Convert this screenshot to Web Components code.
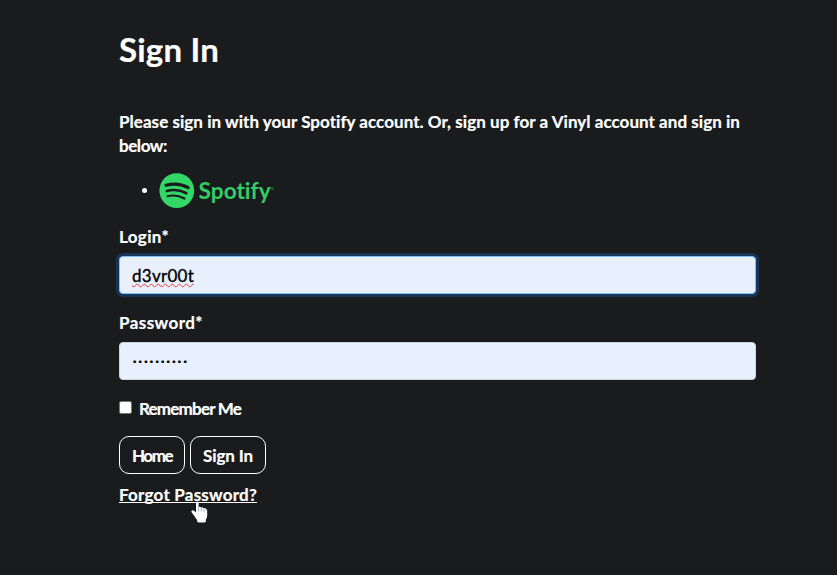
<!DOCTYPE html>
<html lang="en">
<head>
<meta charset="utf-8">
<title>Sign In</title>
<style>
html,body{margin:0;height:100%;background:#191b1c;overflow:hidden}
body{color:#fff;font:700 17px/24px Lato,"Liberation Sans",sans-serif;-webkit-text-stroke:.2px currentColor;font-variant-ligatures:none}
</style>
</head>
<body>
<sign-in-page></sign-in-page>
<script>
const define = (name, html, setup) => customElements.define(name, class extends HTMLElement {
  connectedCallback() {
    if (this.shadowRoot) return;
    const t = document.createElement('template');
    t.innerHTML = html;
    this.attachShadow({mode: 'open'}).append(t.content.cloneNode(true));
    if (setup) setup(this, this.shadowRoot);
  }
});

// A run of text whose tracking is adjusted to fill the width given in `w`.
define('fit-text', `<style>:host{display:inline-block;white-space:pre;width:max-content}span{display:inline-block;transform:translateY(var(--shift,1px));text-decoration:var(--line,none);text-underline-offset:var(--offset,auto);text-decoration-skip-ink:none}</style><span><slot></slot></span>`, (el, root) => {
  const w = parseFloat(el.getAttribute('w'));
  const span = root.querySelector('span');
  const n = el.textContent.length;
  const natural = span.getBoundingClientRect().width;
  el.style.letterSpacing = (w - natural) / n + 'px';
  el.style.width = w + 'px';
});

define('spotify-logo', `<style>:host{display:block;width:116px;height:36px}svg{display:block}</style>
<svg width="116" height="36" viewBox="0 0 116 36">
<circle cx="17.8" cy="17.6" r="17.4" fill="#32d768"/>
<g fill="none" stroke="#191b1c" stroke-linecap="round">
<path d="M7 12.3Q18.5 9 29.2 14.6" stroke-width="3.2"/>
<path d="M7.8 18Q18 15.2 27.3 20.2" stroke-width="2.7"/>
<path d="M8.6 23.2Q17.5 21 25.4 25.5" stroke-width="2.2"/></g>
<text x="39.6" y="25.5" textLength="72" lengthAdjust="spacingAndGlyphs" fill="#32cd65" font-family="Lato" font-weight="700" font-size="23.5">Spotify</text>
<circle cx="113.2" cy="15.4" r="1" fill="none" stroke="#248c49" stroke-width=".8"/>
</svg>`);

define('text-field', `<style>
:host{display:block}
.label{display:block;height:24px;margin-bottom:8px}
.box{box-sizing:border-box;height:38px;padding:6px 12px;border:1px solid #ced4da;border-radius:4px;background:#e8f0fe;color:#000;font-weight:400;display:flex;align-items:center}
:host([focused]) .box{border-color:#80bdff;box-shadow:0 0 0 3px #173557}
</style><span class="label"><slot name="label"></slot></span><div class="box"><slot></slot></div>`);

define('outline-button', `<style>
:host{display:block}
button{box-sizing:border-box;display:block;height:38px;padding:0 12px;border:1px solid #fff;border-radius:10px;background:none;color:inherit;font:inherit}
</style><button type="button"><slot></slot></button>`);

define('check-option', `<style>
:host{display:flex;align-items:center;gap:7px;height:24px}
i{box-sizing:border-box;width:13px;height:13px;border:1px solid #767676;border-radius:2px;background:#fff;margin-top:-2px}
</style><i></i><slot></slot>`);

define('hand-pointer', `<style>:host{display:block;width:18px;height:22px}svg{display:block}</style>
<svg width="18" height="22" viewBox="0 0 18 22"><path fill="#fff" d="M5 1.7Q5 .4 6.3.4T7.6 1.7V6.2Q8.8 5.2 10 6.6 11.3 5.7 12.5 7.3 14 6.6 15.2 8.2 16.2 8.2 16.2 9.8V14.5Q16.2 16.5 14.8 18.6V21Q10.5 22.2 6.2 21V19Q4.5 17.5 3.6 15.3L.6 11.2Q0 9.6 1.4 9.2 2.8 9 5 11.6Z"/><path d="M7.6 6.3V10.5M10.3 7V10.5M13 7.8V10.8" stroke="#777" stroke-width=".6" fill="none"/></svg>`);

define('sign-in-page', `<style>
:host{display:block;padding:30px 81px 0 119px}
h1{margin:0;height:39px;font-size:33px;line-height:39px;font-weight:700;--shift:0px}
hr{border:0;border-top:1px solid #1d1a25;margin:23px 0 16px}
p,ul{margin:0}
p{height:48px;margin-bottom:16px}
p fit-text{vertical-align:top}
ul{list-style:none;padding:0 0 0 23px;display:flex;align-items:center;gap:12px;height:36px}
.dot{width:5px;height:5px;border-radius:50%;background:#fff;margin-top:-1px}
.login{margin-top:15px}
.password{margin-top:16px}
check-option{margin-top:16px}
.actions{display:flex;gap:5px;margin-top:16px}
.forgot{display:block;width:max-content;margin-top:8px;color:inherit;position:relative;text-decoration:none}
.forgot fit-text{display:block;--line:underline 1px;--offset:1px}
hand-pointer{position:absolute;left:72px;top:19px}
.user{height:24px;-webkit-text-stroke:.35px #000;--line:underline wavy #f23b3b 1px;--offset:1px}
.secret{color:#000;font-family:"DejaVu Sans",sans-serif;font-size:9px}
</style>
<h1><fit-text w="100">Sign In</fit-text></h1>
<hr>
<p><fit-text w="621">Please sign in with your Spotify account. Or, sign up for a Vinyl account and sign in</fit-text><br><fit-text w="48">below:</fit-text></p>
<ul><li class="dot"></li><li><spotify-logo></spotify-logo></li></ul>
<text-field class="login" focused><fit-text slot="label" w="50">Login*</fit-text><fit-text class="user" w="62">d3vr00t</fit-text></text-field>
<text-field class="password"><fit-text slot="label" w="84">Password*</fit-text><fit-text class="secret" w="56">••••••••••</fit-text></text-field>
<check-option><fit-text w="102">Remember Me</fit-text></check-option>
<div class="actions"><outline-button><fit-text w="40">Home</fit-text></outline-button><outline-button><fit-text w="50">Sign In</fit-text></outline-button></div>
<a class="forgot"><fit-text w="138">Forgot Password?</fit-text><hand-pointer></hand-pointer></a>`);
</script>
</body>
</html>
